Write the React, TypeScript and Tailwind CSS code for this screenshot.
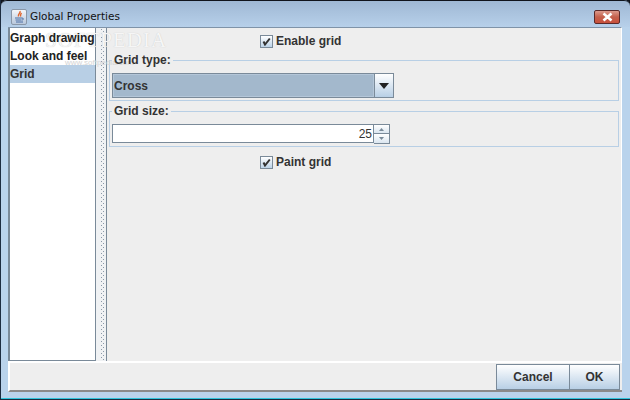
import React, { FunctionComponent } from "react";

const Check: FunctionComponent<{ label: string; className?: string }> = ({ label, className }) => (
  <div className={`flex items-center gap-[3px] pl-[151px] ${className ?? ""}`}>
    <div className="flex h-[13px] w-[13px] items-center justify-center border border-[#7a8a99] bg-gradient-to-b from-[#ffffff] to-[#bcd3e8]">
      <svg width="9" height="9" viewBox="0 0 9 9">
        <path d="M1.5 4.5 L3 7.5 L7.8 1.5" fill="none" stroke="#333333" strokeWidth="2" />
      </svg>
    </div>
    <span className="text-[12px] leading-[14px] font-bold text-[#333333]">{label}</span>
  </div>
);

const JavaIcon: FunctionComponent = () => (
  <div className="flex h-[16px] w-[16px] items-center justify-center rounded-[2px] border border-[#8a97a8] bg-gradient-to-b from-[#f4f6fa] to-[#b9c8dc]">
    <svg width="14" height="14" viewBox="0 0 14 14">
      <path d="M8 1 C9 3 5.5 4 6.5 6.5 M9.5 3 C8.5 4.500 8 5 8.700 6.500" fill="none" stroke="#e0662f" strokeWidth="1.400" />
      <path d="M3 8 H10 M3.500 10 H9.500 M4 12 H11 M10 8 C12 8 12 10 9.800 10" fill="none" stroke="#4a6fa5" strokeWidth="1" />
    </svg>
  </div>
);

const App: FunctionComponent = () => {
  const items = ["Graph drawing", "Look and feel", "Grid"];
  const dots = Array.from({ length: 83 });

  return (
    <div className="relative h-[400px] w-[630px] overflow-hidden border-b border-l border-[#1c2c40] bg-[#10141c] font-['Liberation_Sans',sans-serif]">
      <div className="flex h-full flex-col rounded-t-[6px] bg-[#b9d3ec]">
        {/* Title bar */}
        <div className="flex h-[27px] shrink-0 items-center justify-between rounded-t-[6px] border-t border-[#10141c] bg-gradient-to-b from-[#9fb8d4] to-[#b7d0ea] pt-[6px] pr-[10px] pl-[10px]">
          <div className="flex items-center gap-[3px]">
            <JavaIcon />
            <span className="font-['DejaVu_Sans',sans-serif] text-[10.5px] text-[#111111]">Global Properties</span>
          </div>
          <div className="flex h-[14px] w-[26px] items-center justify-center rounded-[2px] border border-[#5a2a2a] bg-gradient-to-b from-[#dc9a8c] via-[#c4604c] to-[#c8503c]">
            <svg width="13" height="10" viewBox="0 0 13 10">
              <path d="M2.500 1.500 L10.500 8.500 M10.500 1.500 L2.500 8.500" stroke="#ffffff" strokeWidth="2.600" />
            </svg>
          </div>
        </div>

        {/* Dialog body */}
        <div className="mr-[8px] ml-[7px] flex h-[336px] shrink-0 flex-col border-t border-r border-[#7f93a8] border-r-white bg-[#eeeeee]">
          <div className="flex min-h-0 flex-1">
            {/* Left list */}
            <div className="w-[88px] shrink-0 border-r border-b border-l-2 border-[#7a8a99] bg-white pt-[1px] text-[12px] font-bold text-[#222222]">
              {items.map((item, index) => (
                <div key={item} className={`relative z-10 h-[18px] whitespace-nowrap leading-[19px] ${index === 2 ? "bg-[#b8cfe5] text-[#333333]" : ""}`}>
                  {item}
                </div>
              ))}
            </div>

            {/* Splitter */}
            <div className="flex w-[11px] shrink-0 justify-center gap-[1px] overflow-hidden border-r border-[#7a8a99] bg-[#f0f2f4] pl-[3px]">
              <div className="flex w-[1px] flex-col gap-[3px] pt-[1px]">
                {dots.map((_, index) => (
                  <div key={index} className="h-[1px] w-[1px] shrink-0 bg-[#8a98a8]" />
                ))}
              </div>
              <div className="flex w-[1px] flex-col gap-[3px] pt-[3px]">
                {dots.map((_, index) => (
                  <div key={index} className="h-[1px] w-[1px] shrink-0 bg-[#8a98a8]" />
                ))}
              </div>
            </div>

            {/* Settings panel */}
            <div className="min-w-0 flex-1 pr-[2px] pl-[2px]">
              <Check label="Enable grid" className="mt-[6px]" />

              <fieldset className="mt-[6px] h-[47px] border border-[#b8cfe5] pl-[2px]">
                <legend className="relative z-10 px-[2px] text-[12px] leading-[13px] font-bold text-[#333333]">Grid type:</legend>
                <div className="mt-[6px] flex h-[25px] w-[282px] border border-[#7a8a99] bg-white">
                  <div className="flex flex-1 items-center border border-[#b4c6d8] bg-[#a3b8cc] text-[12px] font-bold text-[#333333]">Cross</div>
                  <div className="flex w-[19px] items-center justify-center border-l border-[#7a8a99] bg-gradient-to-b from-[#ffffff] to-[#b8cfe5]">
                    <svg width="10" height="6" viewBox="0 0 10 6">
                      <path d="M0 0 H10 L5 6 Z" fill="#222222" />
                    </svg>
                  </div>
                </div>
              </fieldset>

              <fieldset className="mt-[4px] h-[42px] border border-[#b8cfe5] pl-[2px]">
                <legend className="px-[2px] text-[12px] leading-[13px] font-bold text-[#333333]">Grid size:</legend>
                <div className="mt-[6px] flex h-[20px] w-[278px]">
                  <div className="flex h-[19px] flex-1 items-center justify-end border border-[#7a8a99] bg-white pr-[1px] text-[12px] text-[#333333]">25</div>
                  <div className="flex w-[16px] flex-col">
                    <div className="flex h-[10px] items-center justify-center border border-l-0 border-[#7a8a99] bg-gradient-to-b from-white to-[#dbe6f0]">
                      <svg width="5" height="3" viewBox="0 0 5 3"><path d="M0 3 H5 L2.500 0 Z" fill="#7a8a99" /></svg>
                    </div>
                    <div className="flex h-[10px] items-center justify-center border border-t-0 border-l-0 border-[#7a8a99] bg-gradient-to-b from-white to-[#dbe6f0]">
                      <svg width="5" height="3" viewBox="0 0 5 3"><path d="M0 0 H5 L2.500 3 Z" fill="#7a8a99" /></svg>
                    </div>
                  </div>
                </div>
              </fieldset>

              <Check label="Paint grid" className="mt-[8px]" />
            </div>
          </div>
          <div className="h-[2px] shrink-0 bg-white" />
        </div>

        {/* Button bar */}
        <div className="mr-[8px] ml-[7px] flex h-[29px] shrink-0 justify-end border-b-2 border-l-2 border-[#8a8a8a] border-l-white bg-[#eeeeee] pt-[1px] pr-[2px]">
          <div className="flex h-[26px] w-[74px] items-center justify-center border border-[#7a8a99] bg-gradient-to-b from-white to-[#b8cfe5] text-[12px] font-bold text-[#333333]">Cancel</div>
          <div className="-ml-px flex h-[26px] w-[51px] items-center justify-center border border-[#7a8a99] bg-gradient-to-b from-white to-[#b8cfe5] text-[12px] font-bold text-[#333333]">OK</div>
        </div>

        <div className="mt-auto h-[1px] shrink-0 bg-[#2fc4dc]" />
      </div>

      {/* Watermark over the dialog */}
      <div className="pointer-events-none absolute top-[25px] left-[44px] font-['Liberation_Serif',serif] text-[21px] tracking-[1px] text-[#f6f6f6] [text-shadow:0_0_1px_#c4c4c4]">SOFTPEDIA</div>
      <div className="pointer-events-none absolute top-[57px] left-[64px] text-[8px] text-[#d4d4d4]">www.softpedia.com</div>
    </div>
  );
};

export default App;
